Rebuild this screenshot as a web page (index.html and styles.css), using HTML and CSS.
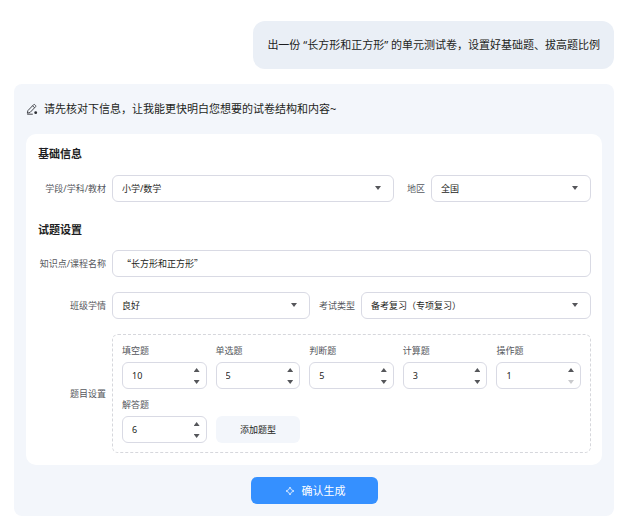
FILE: index.html
```html
<!DOCTYPE html>
<html lang="zh-CN">
<head>
<meta charset="utf-8">
<meta name="viewport" content="width=device-width, initial-scale=1">
<title>试卷生成</title>
<link rel="stylesheet" href="styles.css">
</head>
<body>
<main class="chat">
  <p class="bubble">出一份 “长方形和正方形” 的单元测试卷，设置好基础题、拔高题比例</p>

  <form class="panel">
    <div class="panel-head">
      <svg class="edit-icon" viewBox="0 0 12 12" aria-hidden="true">
        <path d="M1.3 10.2 1.9 7.6 7.6 1.7Q8.2 1.2 8.8 1.7L9.6 2.5Q10.1 3.1 9.6 3.7L4 9.5 1.3 10.2ZM6.6 2.8 8.6 4.8M1.2 11.2H6.8"/>
        <circle cx="9.7" cy="9.7" r="1.4"/>
      </svg>
      <span>请先核对下信息，让我能更快明白您想要的试卷结构和内容~</span>
    </div>

    <div class="card">
      <h2 class="title">基础信息</h2>
      <div class="row row-basic">
        <label class="label" for="subject">学段/学科/教材</label>
        <span class="select"><select id="subject"><option>小学/数学</option></select></span>
        <label class="label" for="region">地区</label>
        <span class="select"><select id="region"><option>全国</option></select></span>
      </div>

      <h2 class="title title-next">试题设置</h2>
      <div class="row row-topic">
        <label class="label" for="topic">知识点/课程名称</label>
        <input class="field" id="topic" type="text" value="“长方形和正方形”">
      </div>
      <div class="row row-exam">
        <label class="label" for="level">班级学情</label>
        <span class="select"><select id="level"><option>良好</option></select></span>
        <label class="label" for="kind">考试类型</label>
        <span class="select"><select id="kind"><option>备考复习（专项复习）</option></select></span>
      </div>
      <div class="row row-topic">
        <span class="label" id="types">题目设置</span>
        <div class="types" role="group" aria-labelledby="types">
          <div class="type">
            <label for="q1">填空题</label>
            <div class="number"><input id="q1" type="number" min="1" value="10"><span class="steps"><button class="up" type="button" aria-label="增加"></button><button class="down" type="button" aria-label="减少"></button></span></div>
          </div>
          <div class="type">
            <label for="q2">单选题</label>
            <div class="number"><input id="q2" type="number" min="1" value="5"><span class="steps"><button class="up" type="button" aria-label="增加"></button><button class="down" type="button" aria-label="减少"></button></span></div>
          </div>
          <div class="type">
            <label for="q3">判断题</label>
            <div class="number"><input id="q3" type="number" min="1" value="5"><span class="steps"><button class="up" type="button" aria-label="增加"></button><button class="down" type="button" aria-label="减少"></button></span></div>
          </div>
          <div class="type">
            <label for="q4">计算题</label>
            <div class="number"><input id="q4" type="number" min="1" value="3"><span class="steps"><button class="up" type="button" aria-label="增加"></button><button class="down" type="button" aria-label="减少"></button></span></div>
          </div>
          <div class="type">
            <label for="q5">操作题</label>
            <div class="number"><input id="q5" type="number" min="1" value="1"><span class="steps"><button class="up" type="button" aria-label="增加"></button><button class="down" type="button" aria-label="减少" disabled></button></span></div>
          </div>
          <div class="type">
            <label for="q6">解答题</label>
            <div class="number"><input id="q6" type="number" min="1" value="6"><span class="steps"><button class="up" type="button" aria-label="增加"></button><button class="down" type="button" aria-label="减少"></button></span></div>
          </div>
          <button class="add" type="button">添加题型</button>
        </div>
      </div>
    </div>

    <button class="submit" type="button">
      <svg class="spark-icon" viewBox="0 0 10 10" aria-hidden="true"><path d="M5 1Q5.6 4.4 9 5 5.6 5.6 5 9 4.4 5.6 1 5 4.4 4.4 5 1Z"/></svg>
      确认生成
    </button>
  </form>
</main>
</body>
</html>
```

FILE: styles.css
```css
* {
  box-sizing: border-box;
}

body {
  margin: 0;
  background: #fff;
  color: #1d1e22;
  font: 11px/16px "Noto Sans", "Noto Sans CJK SC", sans-serif;
}

button,
input,
select {
  margin: 0;
  font: inherit;
  color: inherit;
}

.chat {
  display: flex;
  flex-direction: column;
  gap: 15px;
  padding: 21px 24px 13px 14px;
}

.bubble {
  align-self: flex-end;
  margin: 0;
  padding: 16px 14px;
  border-radius: 12px;
  background: #eaeff6;
}

.panel {
  display: flex;
  flex-direction: column;
  padding: 17px 12px 12px;
  border-radius: 8px;
  background: #f3f6fb;
}

.panel-head {
  display: flex;
  align-items: center;
  gap: 6px;
  margin-bottom: 17px;
}

.edit-icon {
  width: 12px;
  height: 12px;
  fill: none;
  stroke: #44464c;
  stroke-width: 1;
}

.edit-icon circle {
  fill: #2b2d33;
  stroke: none;
}

.card {
  padding: 12px 11px 12px 12px;
  border-radius: 10px;
  background: #fff;
}

.title {
  margin: 0 0 13px;
  font-size: 11px;
  line-height: 16px;
  font-weight: 600;
}

.title-next {
  margin: 20px 0 12px;
}

.row {
  display: grid;
  align-items: center;
  column-gap: 6px;
  font-size: 9px;
  line-height: 14px;
}

.row + .row {
  margin-top: 15px;
}

.row-basic {
  grid-template-columns: 68px 282fr 25px 160fr;
}

.row-topic {
  grid-template-columns: 68px 1fr;
}

.row-exam {
  grid-template-columns: 68px 198fr 39px 230fr;
}

.label {
  color: #55575d;
  text-align: right;
  white-space: nowrap;
}

.field,
.select select,
.number {
  width: 100%;
  height: 27px;
  border: 1px solid #d9dae4;
  border-radius: 6px;
  background: #fff;
}

.field {
  padding: 0 9px;
  font-family: "Noto Sans CJK SC", sans-serif;
}

.select {
  position: relative;
}

.select select {
  display: block;
  padding: 0 24px 0 9px;
  appearance: none;
}

.select::after {
  content: "";
  position: absolute;
  top: 11px;
  right: 13px;
  border: 3px solid transparent;
  border-top: 4px solid #55565a;
  border-bottom: 0;
}

.types {
  display: grid;
  grid-template-columns: repeat(5, 1fr);
  gap: 9px;
  padding: 9px;
  border: 1px dashed #d6d7dc;
  border-radius: 6px;
}

.type {
  display: flex;
  flex-direction: column;
  gap: 4px;
  min-width: 0;
  color: #55575d;
}

.number {
  display: flex;
  color: #1d1e22;
}

.number input {
  flex: 1;
  min-width: 0;
  padding: 0 0 0 9px;
  border: 0;
  background: none;
  appearance: textfield;
}

.number input::-webkit-inner-spin-button {
  display: none;
}

.steps {
  display: flex;
  flex-direction: column;
  justify-content: space-between;
  padding: 5px 6px 4px 0;
}

.steps button {
  width: 6px;
  height: 4px;
  padding: 0;
  border: 0;
  background: #55565a;
}

.steps .up {
  clip-path: polygon(50% 0, 100% 100%, 0 100%);
}

.steps .down {
  clip-path: polygon(0 0, 100% 0, 50% 100%);
}

.steps button:disabled {
  background: #c9cacd;
}

.add {
  align-self: end;
  height: 27px;
  padding: 0;
  border: 0;
  border-radius: 6px;
  background: #f3f6fb;
}

.submit {
  display: flex;
  align-items: center;
  justify-content: center;
  align-self: center;
  gap: 7px;
  height: 27px;
  margin-top: 12px;
  padding: 0 32px 0 34px;
  border: 0;
  border-radius: 6px;
  background: #3590ff;
  color: #fff;
}

.spark-icon {
  width: 10px;
  height: 10px;
  fill: none;
  stroke: #d9eaff;
  stroke-width: 1;
}
```
